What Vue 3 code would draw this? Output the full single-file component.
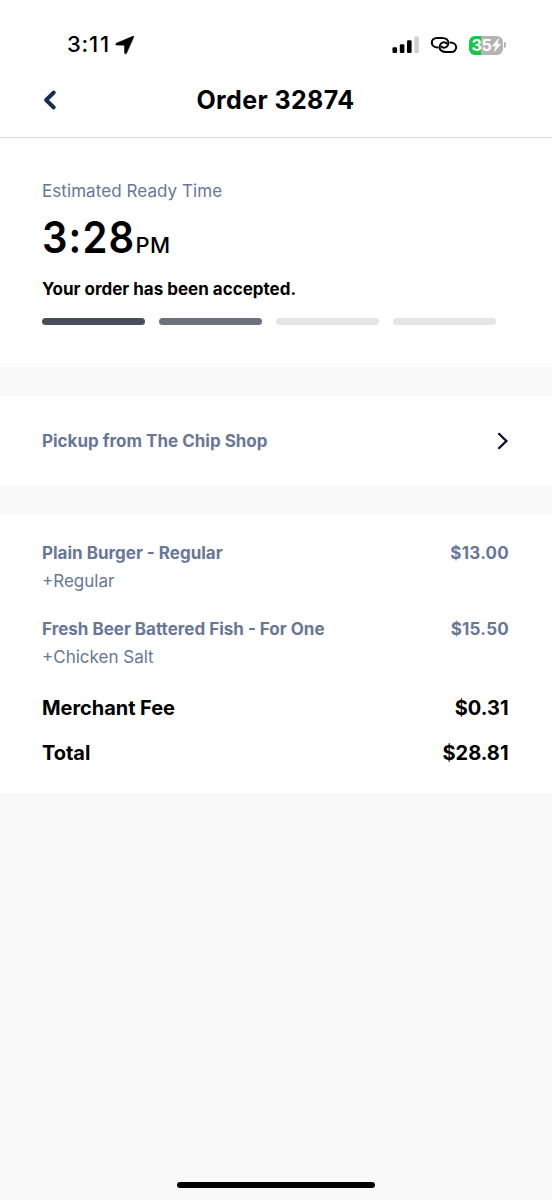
<script setup>
const steps = ['done', 'current', 'pending', 'pending']
const items = [
  { name: 'Plain Burger - Regular', option: '+Regular', price: '$13.00', cls: 'burger' },
  { name: 'Fresh Beer Battered Fish - For One', option: '+Chicken Salt', price: '$15.50', cls: 'fish' },
]
const totals = [
  { label: 'Merchant Fee', value: '$0.31', cls: 'fee' },
  { label: 'Total', value: '$28.81', cls: 'total' },
]
</script>

<template>
  <div class="screen">
    <header class="header">
      <div class="status">
        <span class="clock">3:<span class="minutes">11</span></span>
        <svg class="location" width="20" height="20" viewBox="0 0 20 20">
          <path d="M17.900 1.300 1.400 8.200c-1.100.5-.8 1.900.4 1.900l7.700.1.1 7.500c0 1.300 1.500 1.600 2 .4L18.700 2.100c.3-.7-.1-1.100-.8-.8Z" stroke="#000" stroke-width=".6" />
        </svg>
        <svg class="signal" width="28" height="18" viewBox="0 0 28 18">
          <rect x="0.500" y="11.300" width="4.600" height="5.700" rx="1.200" />
          <rect x="7.800" y="8.300" width="4.600" height="8.700" rx="1.200" />
          <rect x="15" y="4.300" width="4.600" height="12.700" rx="1.200" />
          <rect x="22.300" y="0.500" width="4.600" height="16.500" rx="1.200" fill="#d0d0d0" />
        </svg>
        <svg class="link" width="28" height="18" viewBox="0 0 28 18" fill="none" stroke="#000" stroke-width="2" stroke-linecap="round">
          <path d="M7.600 11.600C4.200 11.400 1.800 9.400 1.800 6.700 1.800 4 4 2 6.800 2h5.400c3.700 0 6.200 2 6.200 4.800 0 2.900-2 4.900-4.600 4.900-1.200 0-2-.5-2.400-1.200" />
          <path d="M20.400 6.400c3.300.2 5.800 2.200 5.800 4.900 0 2.700-2.200 4.700-5 4.700h-5.400c-3.700 0-6.200-2-6.200-4.800 0-2.900 2-4.900 4.600-4.900 1.200 0 2 .5 2.400 1.200" />
        </svg>
        <div class="battery">
          <span class="level">35</span>
          <svg class="bolt" width="9" height="14" viewBox="0 0 9 14"><path d="M6.300.4.4 7.400c-.3.4-.1.8.3.8h2.900l-1.500 5.100c-.1.4.3.5.6.2l5.900-7c.3-.4.1-.8-.3-.8H5.400L6.900.7c.1-.4-.3-.6-.6-.3Z" fill="#fff" /></svg>
        </div>
        <span class="nub"></span>
      </div>
      <div class="nav">
        <svg class="back" width="14" height="22" viewBox="0 0 14 22" fill="none" stroke="#182c52" stroke-width="3.900" stroke-linecap="round" stroke-linejoin="round"><path d="M10.800 3.500 3.100 11l7.700 7.500" /></svg>
        <h1 class="title">Order 32874</h1>
      </div>
    </header>

    <section class="ready">
      <p class="caption">Estimated Ready Time</p>
      <p class="time"><span class="digits">3:28</span><span class="period">PM</span></p>
      <p class="message">Your order has been accepted.</p>
      <div class="progress">
        <span v-for="(step, i) in steps" :key="i" class="step" :class="step"></span>
      </div>
    </section>

    <section class="pickup">
      <span class="place">Pickup from The Chip Shop</span>
      <svg width="14" height="20" viewBox="0 0 14 20" fill="none" stroke="#060b3a" stroke-width="2.300"><path d="m2.400 2.200 8 7.800-8 7.800" /></svg>
    </section>

    <section class="summary">
      <div v-for="item in items" :key="item.name" class="item" :class="item.cls">
        <div class="row"><span class="name">{{ item.name }}</span><span class="price">{{ item.price }}</span></div>
        <p class="option">{{ item.option }}</p>
      </div>
      <div v-for="line in totals" :key="line.label" class="row sum" :class="line.cls">
        <span class="label">{{ line.label }}</span><span class="value">{{ line.value }}</span>
      </div>
    </section>

    <div class="home"></div>
  </div>
</template>

<style>
body { margin: 0; background: #f9f9f9; }
</style>

<style scoped>
* { box-sizing: border-box; }
p, h1 { margin: 0; }
.screen {
  display: flex;
  flex-direction: column;
  width: 552px;
  height: 1200px;
  overflow: hidden;
  background: #f9f9f9;
  color: #000;
  font-family: Inter, "Liberation Sans", sans-serif;
  white-space: nowrap;
}
svg { display: block; flex: none; }
.header { height: 138px; background: #fff; border-bottom: 1px solid #dadada; }
.status { display: flex; align-items: center; height: 70px; padding: 20px 46px 0 67px; }
.clock { width: 48px; margin-bottom: 2px; font-size: 22px; font-weight: 500; letter-spacing: 0.7px; }
.minutes { letter-spacing: 2px; }
.signal { margin-left: auto; }
.link { margin-left: 10px; }
.battery {
  display: flex;
  align-items: center;
  justify-content: center;
  width: 34px;
  height: 19px;
  margin-left: 11px;
  border-radius: 6px;
  background: linear-gradient(90deg, #14c844 0 12px, #b4b4b4 12px);
}
.level { color: #fff; font-size: 16px; line-height: 19px; font-weight: 700; letter-spacing: -0.2px; }
.nub { width: 2px; height: 6px; margin-left: 1px; border-radius: 0 2px 2px 0; background: #b4b4b4; }
.nav { display: grid; grid-template-columns: 60px 1fr 60px; align-items: center; height: 60px; }
.back { margin-left: 43px; }
.title { font-size: 25px; line-height: 30px; font-weight: 700; letter-spacing: 0.4px; text-align: center; padding-right: 1px; }
.ready { height: 229px; padding: 42px 42px 0; background: #fff; }
.caption { font-size: 17px; line-height: 22px; letter-spacing: 0.07px; color: #687797; }
.time { display: flex; align-items: baseline; height: 54px; margin-top: 8px; line-height: 54px; }
.digits { width: 93.500px; font-size: 44px; font-weight: 580; letter-spacing: 1.200px; transform: scaleX(0.91); transform-origin: left; }
.period { font-size: 22px; font-weight: 500; letter-spacing: 0.3px; }
.message { margin-top: 14px; font-size: 17px; line-height: 22px; font-weight: 700; }
.progress { display: flex; gap: 14px; width: 454px; margin-top: 18px; }
.step { flex: 1; height: 7px; border-radius: 4px; background: #e5e5e5; }
.step.done { background: #474f5a; }
.step.current { background: #6c727c; }
.pickup { display: flex; align-items: center; justify-content: space-between; height: 90px; margin-top: 29px; padding: 0 42px; background: #fff; }
.place, .name, .price { color: #687797; font-size: 17px; line-height: 22px; font-weight: 700; }
.price { letter-spacing: 0.25px; }
.summary { height: 279px; margin-top: 28px; padding: 28px 43px 0 42px; background: #fff; }
.row { display: flex; justify-content: space-between; align-items: center; }
.item { height: 76px; }
.option { margin-top: 6px; color: #687797; font-size: 17px; line-height: 22px; }
.sum { height: 45px; font-size: 20px; line-height: 24px; font-weight: 700; }
.fee { margin-top: -9px; }
.label { letter-spacing: -0.05px; }
.value { padding-right: 0.5px; }
.home { align-self: center; width: 198px; height: 6px; margin-top: auto; margin-bottom: 12px; border-radius: 4px; background: #000; }
</style>
